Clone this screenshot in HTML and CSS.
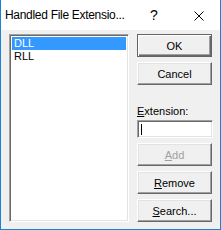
FILE: index.html
```html
<!DOCTYPE html>
<html lang="en">
<head>
  <meta charset="UTF-8">
  <title>Handled File Extensions</title>
  <link rel="stylesheet" href="styles.css">
</head>
<body>
  <div class="window">
    <div class="titlebar">
      <span class="title">Handled File Extensio...</span>
      <span class="help">?</span>
      <span class="close">
        <svg width="10" height="10" viewBox="0 0 10 10">
          <path d="M0.5 0.5 L9.5 9.5 M9.5 0.5 L0.5 9.5" stroke="#000" stroke-width="1" fill="none"/>
        </svg>
      </span>
    </div>
    <div class="content">
      <div class="listbox">
        <div class="item selected">DLL</div>
        <div class="item">RLL</div>
      </div>
      <div class="side">
        <button class="btn default">OK</button>
        <button class="btn">Cancel</button>
        <label class="label"><u>E</u>xtension:</label>
        <div class="input"><span class="caret"></span></div>
        <button class="btn disabled"><u>A</u>dd</button>
        <button class="btn"><u>R</u>emove</button>
        <button class="btn"><u>S</u>earch...</button>
      </div>
    </div>
  </div>
</body>
</html>
```

FILE: styles.css
```css
body {
  margin: 0;
  font-family: "Liberation Sans", Arial, sans-serif;
}

.window {
  width: 219px;
  height: 229px;
  border: 1px solid #1883d7;
  border-top: none;
  background: #f0f0f0;
  display: flex;
  flex-direction: column;
}

.titlebar {
  height: 30px;
  background: #fff;
  display: flex;
  align-items: center;
  font-family: "Liberation Sans", Arial, sans-serif;
  font-size: 12px;
  color: #000;
}

.title {
  padding-left: 4px;
  width: 145px;
  white-space: nowrap;
  letter-spacing: -0.3px;
}

.help {
  font-size: 14px;
  width: 44px;
}

.close {
  display: flex;
  padding-top: 1px;
}

.content {
  flex: 1;
  display: flex;
  padding: 4px 8px 0 8px;
  gap: 8px;
}

.listbox {
  width: 116px;
  height: 182px;
  background: #fff;
  border: 1px solid;
  border-color: #a0a0a0 #fff #fff #a0a0a0;
  box-shadow: inset 1px 1px #696969, inset -1px -1px #e3e3e3;
  padding: 2px 2px;
  font-size: 11px;
}

.item {
  height: 13px;
  line-height: 13px;
  padding-left: 2px;
  color: #000;
}

.item.selected {
  background: #3399ff;
  color: #fff;
}

.side {
  display: flex;
  flex-direction: column;
  width: 75px;
}

.btn {
  width: 75px;
  height: 23px;
  margin: 0 0 5px 0;
  padding: 0;
  background: #f0f0f0;
  border: 1px solid;
  border-color: #fff #696969 #696969 #fff;
  box-shadow: inset -1px -1px #a0a0a0, inset 1px 1px #e3e3e3;
  font-family: "Liberation Sans", Arial, sans-serif;
  font-size: 11px;
  color: #000;
}

.btn.default {
  border-color: #646464;
  box-shadow: inset 1px 1px #fff, inset -1px -1px #696969, inset -2px -2px #a0a0a0;
}

.btn.disabled {
  color: #a0a0a0;
}

.label {
  font-size: 11px;
  margin-top: 14px;
  height: 14px;
  line-height: 14px;
}

.input {
  width: 71px;
  height: 16px;
  margin-top: 2px;
  margin-bottom: 5px;
  background: #fff;
  border: 1px solid;
  border-color: #a0a0a0 #fff #fff #a0a0a0;
  box-shadow: inset 1px 1px #696969, inset -1px -1px #e3e3e3;
  display: flex;
  align-items: center;
  padding-left: 3px;
}

.caret {
  width: 1px;
  height: 11px;
  background: #000;
}
```
